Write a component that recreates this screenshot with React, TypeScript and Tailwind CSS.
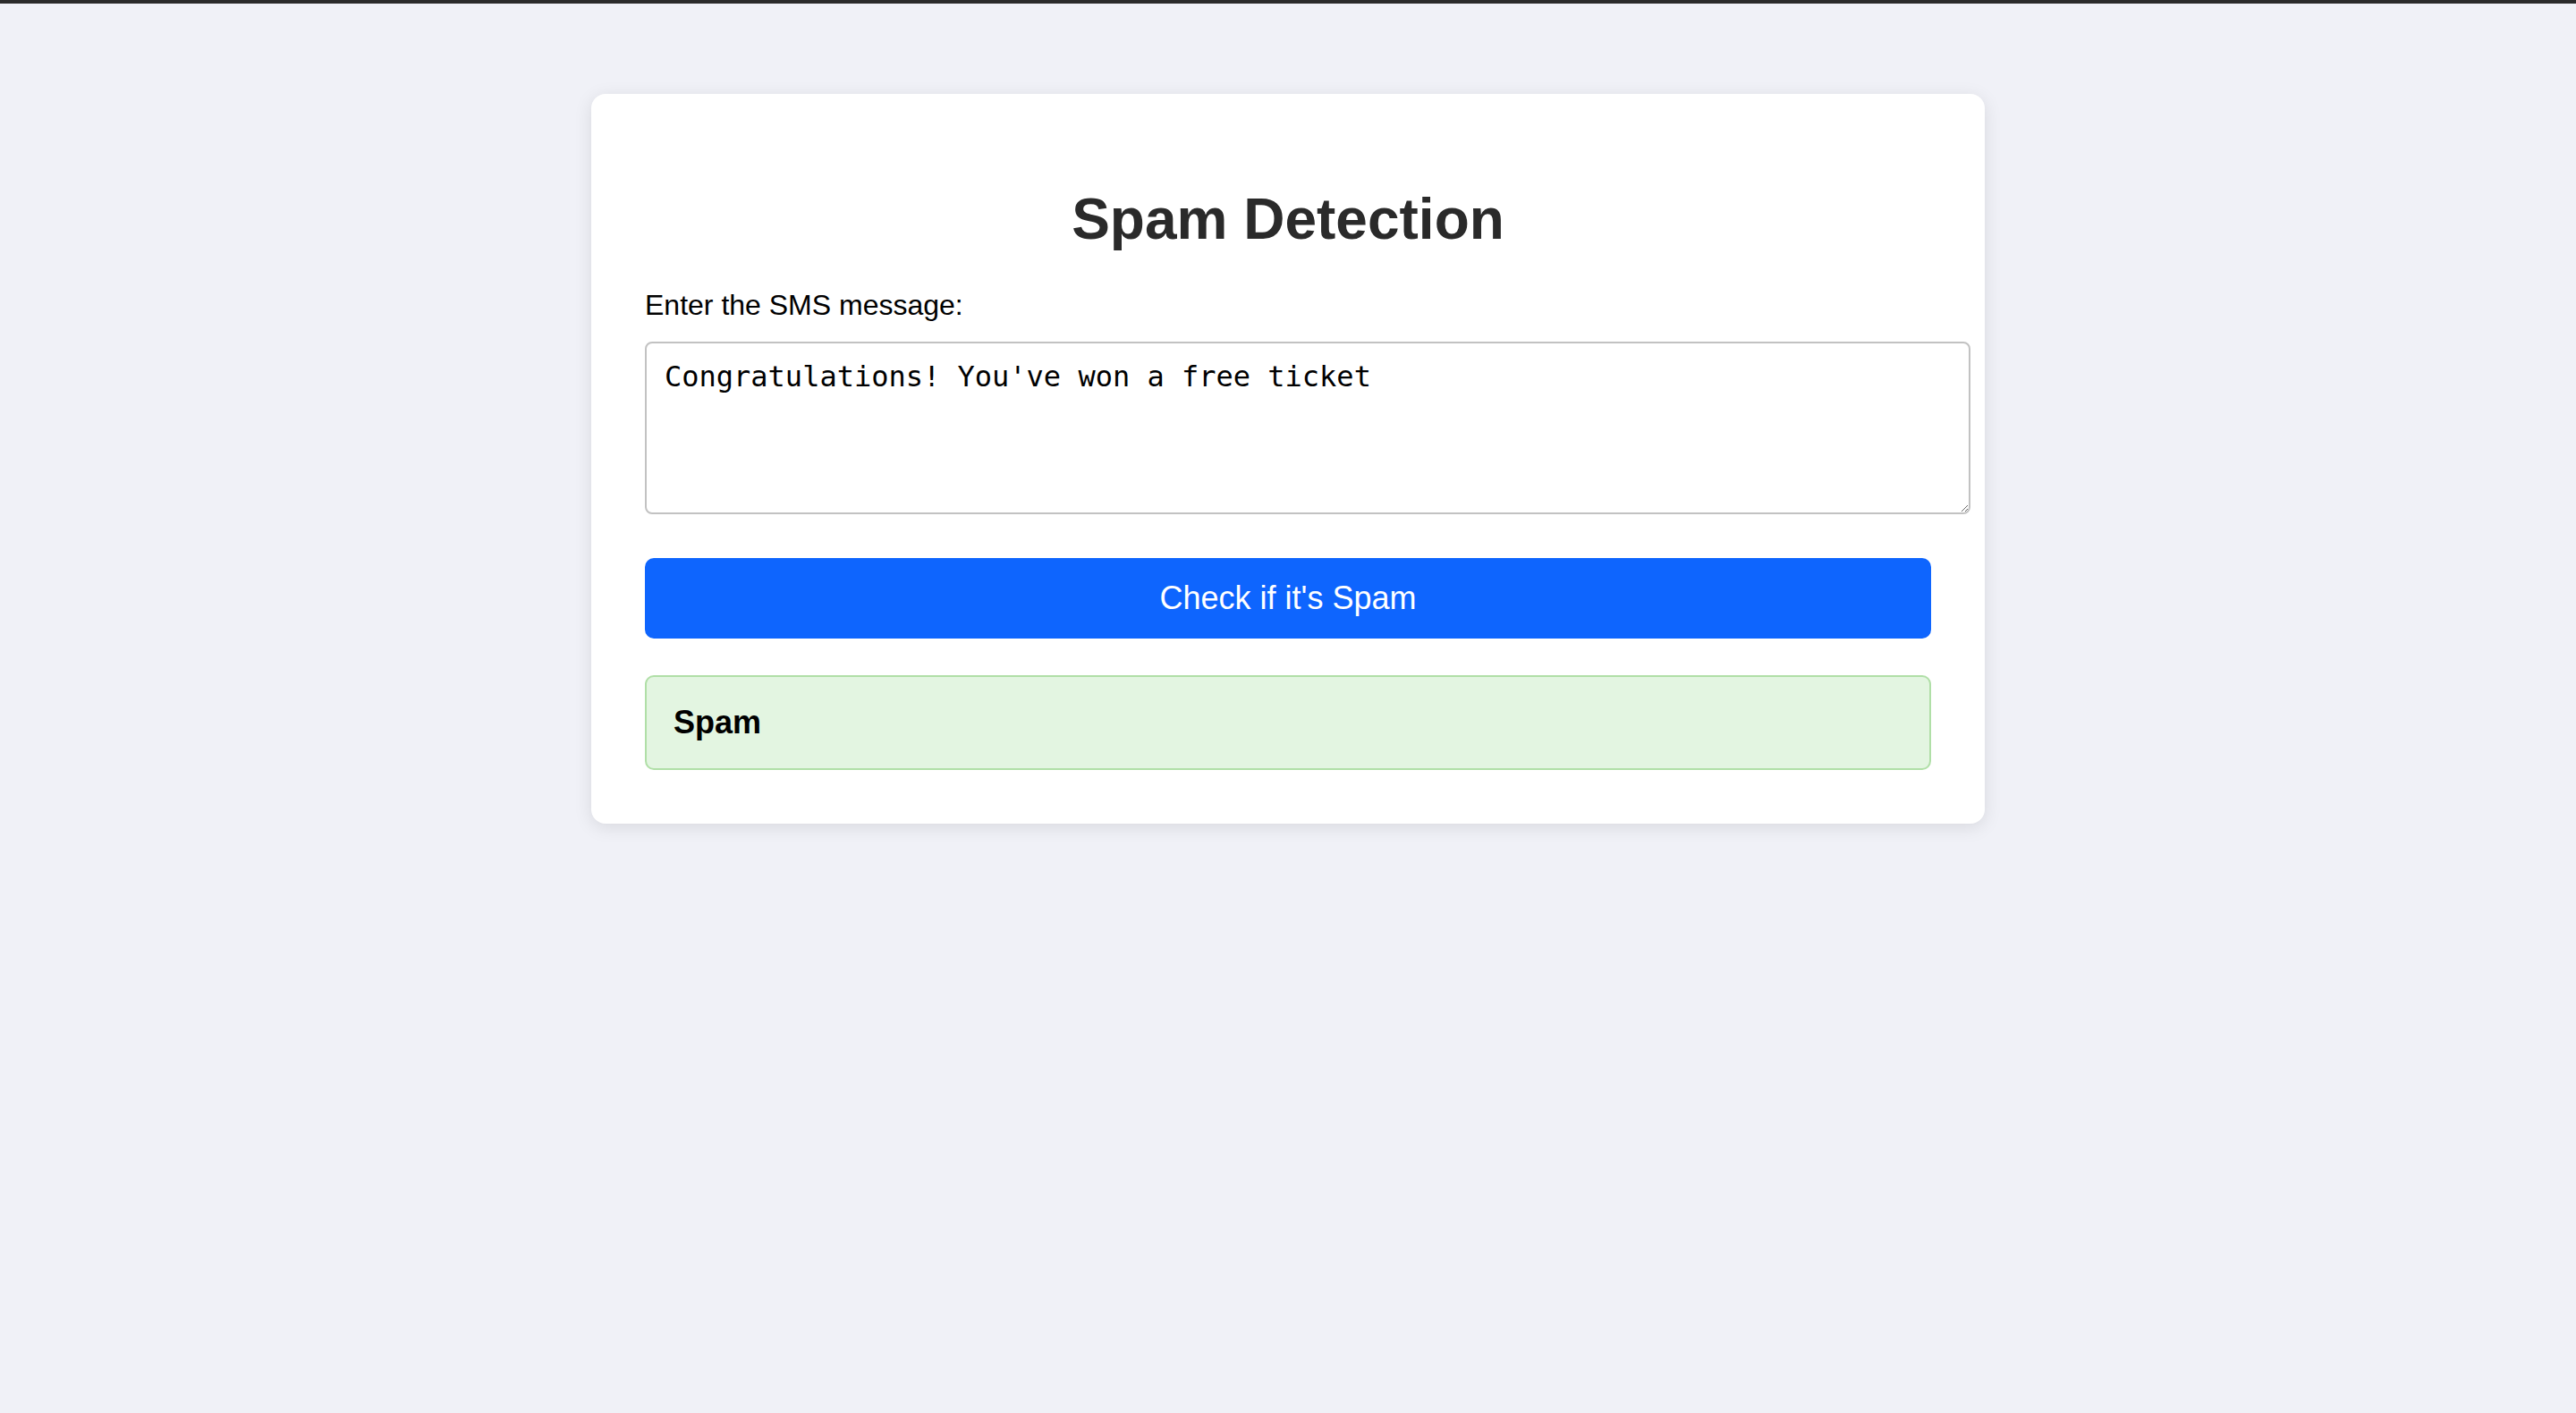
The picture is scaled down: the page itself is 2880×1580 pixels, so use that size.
export default function App() {
  return (
    <div className="min-h-screen bg-[#f0f1f7] font-['Liberation_Sans',Arial,sans-serif]">
      <div className="h-[4px] bg-[#2b2b2b]" />
      <div className="mx-auto mt-[101px] w-[1558px] rounded-[16px] bg-white p-[60px] shadow-[0_4px_20px_rgba(0,0,0,0.1)]">
        <h1 className="mt-[43px] mb-[41px] text-center text-[64px] font-bold leading-[normal] text-[#2a2a2a]">
          Spam Detection
        </h1>
        <form className="flex flex-col">
          <label className="mb-[22px] block text-[32px] leading-[normal] text-black">
            Enter the SMS message:
          </label>
          <textarea
            defaultValue="Congratulations! You've won a free ticket"
            className="block h-[193px] w-[1482px] resize rounded-[8px] border-2 border-[#c2c2c2] bg-white px-[20px] pt-[18px] pb-[20px] font-['DejaVu_Sans_Mono',monospace] text-[32px] leading-[normal] text-black outline-none"
          />
          <button
            type="button"
            className="mt-[49px] w-full rounded-[10px] bg-[#0e65fe] py-[24px] text-[36px] leading-[normal] text-white hover:cursor-pointer"
          >
            Check if it's Spam
          </button>
        </form>
        <div className="mt-[41px] rounded-[10px] border-2 border-[#b0dfa7] bg-[#e3f5e1] p-[30px] text-[36px] font-bold leading-[normal] text-black">
          Spam
        </div>
      </div>
    </div>
  );
}
